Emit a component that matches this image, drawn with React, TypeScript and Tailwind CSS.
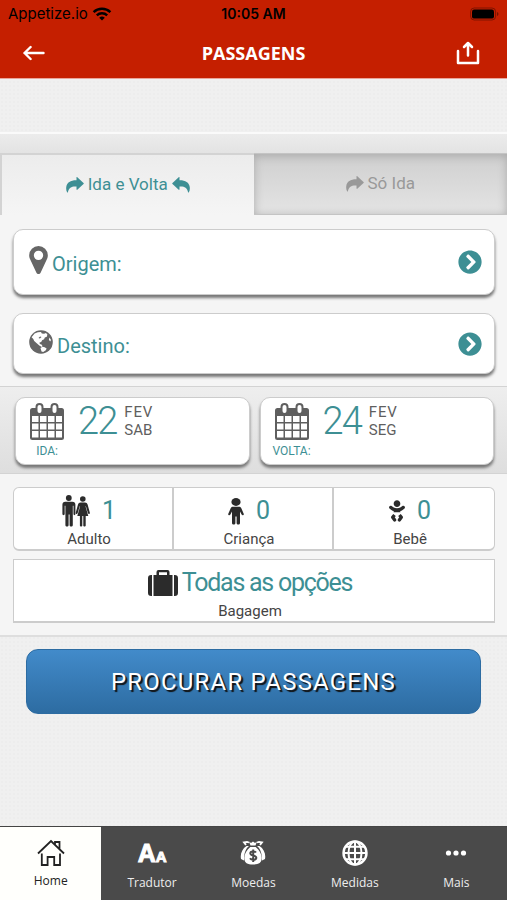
import type { ReactNode } from 'react';
import { useState } from 'react';
import { FaBaby, FaChevronCircleRight } from 'react-icons/fa';

function WifiIcon() {
	return (
		<svg viewBox="0 0 20 14" className="h-[14px] w-5" fill="none" stroke="currentColor" strokeWidth="2.4" aria-hidden="true">
			<path d="M1.6 5.2a12 12 0 0 1 16.8 0" />
			<path d="M4.8 8.4a7.4 7.4 0 0 1 10.4 0" />
			<path d="M10 13.6 7.2 10.8a4 4 0 0 1 5.6 0z" fill="currentColor" stroke="none" />
		</svg>
	);
}

function BatteryIcon() {
	return (
		<svg viewBox="0 0 29 14" className="h-[14px] w-[29px]" aria-hidden="true">
			<rect x=".6" y="1" width="25" height="12" rx="3.6" fill="none" stroke="#000" strokeOpacity=".35" />
			<rect x="2" y="2.6" width="22" height="9" rx="2.2" />
			<path d="M27 5v4c2-.8 2-3.200 0-4z" fillOpacity=".4" />
		</svg>
	);
}

function BackIcon() {
	return (
		<svg viewBox="0 0 22 16" className="h-4 w-[22px]" fill="none" stroke="currentColor" strokeWidth="2.4" strokeLinecap="round" strokeLinejoin="round" aria-hidden="true">
			<path d="M20.500 8H1.500M7.600 2 1.500 8l6.100 6" />
		</svg>
	);
}

function ExportIcon() {
	return (
		<svg viewBox="0 0 24 24" className="size-6" fill="none" stroke="currentColor" strokeWidth="2.500" strokeLinecap="round" strokeLinejoin="round" aria-hidden="true">
			<path d="M2 10v12h20V10M12 14.600V2.200M8 6l4-4 4 4" />
		</svg>
	);
}

function ShareIcon({ flipped }: { flipped?: boolean }) {
	return (
		<svg viewBox="0 0 18 16" className={flipped ? 'h-4 w-[18px] -scale-x-100' : 'h-4 w-[18px]'} fill="currentColor" aria-hidden="true">
			<path d="M10.500.4c0-.4.5-.5.8-.2l6.200 5.700c.4.4.4.8 0 1.200l-6.200 5.600c-.3.300-.8.200-.8-.2V9.600C5.800 9.200 3 10.600 1.900 15.200c-.1.500-.6.500-.8.100C.2 13.500 0 12 .3 9.800 1 5.400 4.600 3.100 10.500 3.200z" />
		</svg>
	);
}

function MarkerIcon() {
	return (
		<svg viewBox="0 0 1024 1536" className="h-7 w-[19px] text-[#666]" fill="currentColor" aria-hidden="true">
			<path d="M768 512q0-106-75-181t-181-75-181 75-75 181 75 181 181 75 181-75 75-181zm256 0q0 109-33 179l-364 774q-16 33-47.500 52t-67.500 19-67.500-19-46.500-52l-365-774q-33-70-33-179 0-212 150-362t362-150 362 150 150 362z" />
		</svg>
	);
}

function EarthIcon() {
	return (
		<svg viewBox="0 0 24 24" className="size-6" aria-hidden="true">
			<circle cx="12" cy="12" r="11.800" fill="#666" />
			<path d="M2.600 7.200 5.600 3.600l3.200-1.300 3.200-.2.800 1.500 2.300.2 1.900-.7 1.400 1.300-.6 2.300-2 .9-.7 1.700-2 1-.9 1.800-1.700.3.300 1.700 1.700.3 1 1.600-.6.900-2.300-1.200-2.600-2.300L5.200 11l-.9-2z" fill="#fff" />
			<path d="m9.500 8 1.600-1.500 1.400.4-1.600 1.500z" fill="#666" />
			<path d="M11.500 18 13.500 16.800l2.200.4 1.900 1.400-.8 1.600-2.600 1.700-1.700-.4z" fill="#fff" />
			<path d="M20.500 7.500 22 10l-.8 1.500-1.300-1.700z" fill="#fff" />
		</svg>
	);
}

function CalendarIcon() {
	return (
		<svg viewBox="0 0 34 38" className="h-[38px] w-[34px]" aria-hidden="true">
			<rect y="5" width="34" height="32" rx="2.500" fill="#5f5f5f" />
			<g fill="#fff">
				<path d="M2 13h6.500v6H2zM10 13h6.500v6H10zM18 13h6.500v6H18zM26 13h6v6h-6z" />
				<path d="M2 20.500h6.500v6H2zM10 20.500h6.500v6H10zM18 20.500h6.500v6H18zM26 20.500h6v6h-6z" />
				<path d="M2 28h6.500v6.500H2zM10 28h6.500v6.500H10zM18 28h6.500v6.500H18zM26 28h6v6.500h-6z" />
			</g>
			<rect x="6.500" y="1" width="6" height="10" rx="3" fill="#fff" stroke="#5f5f5f" strokeWidth="2" />
			<rect x="21.500" y="1" width="6" height="10" rx="3" fill="#fff" stroke="#5f5f5f" strokeWidth="2" />
		</svg>
	);
}

function AdultsIcon() {
	return (
		<svg viewBox="0 0 28 32" className="h-8 w-7" fill="currentColor" aria-hidden="true">
			<circle cx="6.800" cy="3" r="2.900" />
			<path d="M3.200 6.700h7.200c1.900 0 3 1.200 3 3V19c0 1.500-1.900 1.500-1.900 0v-8.300h-.7V30c0 2-3.200 2-3.200 0V19.500h-1V30c0 2-3.200 2-3.200 0V10.700h-.7V19C2.700 20.500.4 20.500.4 19V9.700c0-1.800 1.100-3 2.800-3z" />
			<circle cx="20.800" cy="4" r="2.800" />
			<path d="M18.600 7.500H23c1.400 0 2.200.8 2.600 2l2.200 8c.4 1.500-1.400 2-1.900.5l-2-6.700h-.4L26.300 21h-2.600v9.400c0 1.500-2.400 1.500-2.400 0V21h-1v9.400c0 1.500-2.400 1.500-2.400 0V21h-2.600l2.800-9.700h-.4L15.700 18c-.5 1.500-2.300 1-1.900-.5l2.200-8c.4-1.200 1.200-2 2.600-2z" />
		</svg>
	);
}

function ChildIcon() {
	return (
		<svg viewBox="0 0 16 27" className="h-[27px] w-4" fill="currentColor" aria-hidden="true">
			<ellipse cx="8" cy="4" rx="4.600" ry="3.900" />
			<path d="M5 8.800h6c1 0 1.700.4 2.200 1.300l2.500 5.600c.6 1.400-1.400 2.300-2.100.9L12 13.600V25c0 2-3.400 2-3.400 0v-6.500H7.400V25c0 2-3.400 2-3.400 0V13.600l-1.600 3c-.7 1.400-2.700.5-2.100-.9l2.500-5.600C3.300 9.200 4 8.800 5 8.800z" />
		</svg>
	);
}

function SuitcaseIcon() {
	return (
		<svg viewBox="0 0 30 26" className="h-[26px] w-[30px]" fill="currentColor" aria-hidden="true">
			<path d="M4 5v21h-.8A3.200 3.200 0 0 1 0 22.800V8.200A3.200 3.200 0 0 1 3.200 5zM24.500 5v21h-19V5h3V2A2 2 0 0 1 10.500 0h9a2 2 0 0 1 2 2v3zM11 2.200V5h8V2.200zM26 5h.8A3.200 3.200 0 0 1 30 8.200v14.600a3.200 3.200 0 0 1-3.200 3.200H26z" />
		</svg>
	);
}

function HomeIcon() {
	return (
		<svg viewBox="0 0 28 28" className="size-7" fill="none" stroke="currentColor" strokeWidth="1.800" aria-hidden="true">
			<path d="M1 14.500 14 2l13 12.500M4.800 14.500V26h5.800v-8h6.600v8H23V14.500M18 5.200V3h4.500v6.500" />
		</svg>
	);
}

function LettersIcon() {
	return (
		<span className="flex h-7 items-baseline font-['Liberation_Sans',sans-serif] font-bold text-white [-webkit-text-stroke:1px_white]" aria-hidden="true">
			<span className="text-[25px] leading-7">A</span>
			<span className="text-[15px] leading-7">A</span>
		</span>
	);
}

function MoneyIcon() {
	return (
		<svg viewBox="0 0 28 28" className="size-7" aria-hidden="true">
			<path d="M7 6 5 3.500l3-.5 2 .5M21 6l2-2.500-3-.5-2 .500" fill="none" stroke="#fff" strokeWidth="1.800" />
			<path d="M7.500 7C3 10 1 15 2 20l3 1.500C5 15 6 10.500 10 7zM20.500 7c4.500 3 6.500 8 5.500 13l-3 1.500C23 15 22 10.500 18 7z" fill="#fff" />
			<path d="M10 2.500 12 4l2-1.500L16 4l2-1.500-1.500 4h-5zM11.300 8h5.400c3.800 3 6 7 6 11 0 5-3.200 6.500-8.700 6.500S5.300 24 5.300 19c0-4 2.200-8 6-11z" fill="#fff" />
			<path d="M17 13.500c-1-1.500-5.700-1.700-5.700.8 0 3 6 1.500 6 4.500 0 2.500-5 2.500-6.300.5M14.200 10.500v12.500" fill="none" stroke="#4a4a4a" strokeWidth="2" />
		</svg>
	);
}

function GlobeIcon() {
	return (
		<svg viewBox="0 0 28 28" className="size-7" fill="none" stroke="#fff" strokeWidth="2" aria-hidden="true">
			<circle cx="14" cy="14" r="11.500" strokeWidth="2.400" />
			<ellipse cx="14" cy="14" rx="6.500" ry="11.500" />
			<path d="M14 2.500v23M2.500 14h23M4.500 7.800h19M4.500 20.200h19" />
		</svg>
	);
}

function DotsIcon() {
	return (
		<svg viewBox="0 0 28 28" className="size-7" fill="#fff" aria-hidden="true">
			<circle cx="6.500" cy="14" r="2.600" />
			<circle cx="14" cy="14" r="2.600" />
			<circle cx="21.500" cy="14" r="2.600" />
		</svg>
	);
}

function PlaceButton({ label, icon, className }: { label: string; icon: ReactNode; className: string }) {
	return (
		<button
			type="button"
			className={`${className} flex w-full items-center rounded-[10px] border border-[#ccc] bg-white pr-3 pl-[15px] text-left text-xl text-[#3d8f94] shadow-[0_3px_3px_#777]`}
		>
			<span className="pr-1 pb-1">{icon}</span>
			<span className="grow pt-1">{label}</span>
			<FaChevronCircleRight className="size-6" />
		</button>
	);
}

function DateButton({ label, day, month, weekday }: { label: string; day: string; month: string; weekday: string }) {
	return (
		<button
			type="button"
			className="flex h-[68px] grow items-start rounded-[10px] border border-[#ccc] bg-white pt-[5px] pl-3 text-left shadow-[0_3px_3px_#777]"
		>
			<span className="flex w-[38px] flex-col items-center">
				<CalendarIcon />
				<span className="pt-[2px] text-xs leading-4 text-[#3d8f94]">{label}</span>
			</span>
			<span className="pl-3 text-[38px] leading-9 font-light tracking-tighter text-[#3d8f94]">{day}</span>
			<span className="flex flex-col pl-2 text-[15px] leading-[18px] text-[#5f5f5f]">
				<span className="tracking-wider">{month}</span>
				<span>{weekday}</span>
			</span>
		</button>
	);
}

function Passenger({ label, count, icon }: { label: string; count: number; icon: ReactNode }) {
	return (
		<button type="button" className="flex flex-col items-center pt-[5px] pr-2">
			<span className="flex h-9 items-center gap-3 text-[#2b2b2b]">
				{icon}
				<span className="text-[25px] leading-9 text-[#3d8f94]">{count}</span>
			</span>
			<span className="text-[15px] leading-5 text-[#444]">{label}</span>
		</button>
	);
}

const links = [
	{ label: 'Home', icon: <HomeIcon />, active: true },
	{ label: 'Tradutor', icon: <LettersIcon /> },
	{ label: 'Moedas', icon: <MoneyIcon /> },
	{ label: 'Medidas', icon: <GlobeIcon /> },
	{ label: 'Mais', icon: <DotsIcon /> },
];

export default function App() {
	const [roundTrip, setRoundTrip] = useState(true);

	const activeTab = 'border-t-2 border-l-2 border-[#d3d3d3] bg-linear-to-b from-[#ececec] to-[#f5f5f5] text-[#3d8f94]';
	const idleTab = 'border-y border-[#c4c4c4] bg-linear-to-b from-[#cfcfcf] to-[#e4e4e4] text-[#999] shadow-[inset_0_2px_10px_#aaa]';

	return (
		<div className="flex min-h-screen flex-col bg-[#f0f0f0] bg-[radial-gradient(#ededed_1px,transparent_1px)] bg-size-[4px_4px] font-[Roboto,sans-serif]">
			<header className="border-b border-[#e9a59a] bg-[#c51f00] text-white">
				<div className="grid h-7 grid-cols-3 items-center px-2 font-[Inter,sans-serif] text-sm text-black">
					<span className="flex items-center gap-1 text-[15px]">
						Appetize.io <WifiIcon />
					</span>
					<span className="text-center font-semibold">10:05 AM</span>
					<span className="flex justify-end">
						<BatteryIcon />
					</span>
				</div>
				<div className="grid h-[50px] grid-cols-3 items-center px-[23px]">
					<button type="button" className="justify-self-start" aria-label="Voltar">
						<BackIcon />
					</button>
					<h1 className="text-center font-['Open_Sans',sans-serif] text-lg font-bold">PASSAGENS</h1>
					<button type="button" className="justify-self-end pr-1" aria-label="Compartilhar">
						<ExportIcon />
					</button>
				</div>
			</header>

			<main>
				<div className="h-[55px] border-b-2 border-[#fafafa]" />
				<div className="h-[19px] bg-linear-to-b from-[#ececec] to-[#e3e3e3]" />

				<div className="grid h-[62px] grid-cols-2 bg-[#f5f5f5] text-[17px]" role="tablist">
					<button
						type="button"
						role="tab"
						aria-selected={roundTrip}
						onClick={() => setRoundTrip(true)}
						className={`flex items-center justify-center gap-1 ${roundTrip ? activeTab : idleTab}`}
					>
						<ShareIcon /> Ida e Volta <ShareIcon flipped />
					</button>
					<button
						type="button"
						role="tab"
						aria-selected={!roundTrip}
						onClick={() => setRoundTrip(false)}
						className={`flex items-center justify-center gap-1 ${roundTrip ? idleTab : activeTab}`}
					>
						<ShareIcon /> Só Ida
					</button>
				</div>

				<section className="flex flex-col gap-[18px] border-b border-[#d3d3d3] bg-[#f5f5f5] pt-[14px] pr-3 pb-3 pl-[13px]">
					<PlaceButton label="Origem:" icon={<MarkerIcon />} className="h-[66px]" />
					<PlaceButton label="Destino:" icon={<EarthIcon />} className="h-[61px]" />
				</section>

				<section className="flex gap-[10px] border-b border-[#d3d3d3] bg-linear-to-b from-[#eeeeee] to-[#dedede] pt-[10px] pr-[13px] pb-2 pl-[15px]">
					<DateButton label="IDA:" day="22" month="FEV" weekday="SAB" />
					<DateButton label="VOLTA:" day="24" month="FEV" weekday="SEG" />
				</section>

				<section className="flex flex-col gap-2 border-b-2 border-[#dedede] bg-[#f5f5f5] pt-[13px] pr-3 pb-3 pl-[13px]">
					<div className="grid h-16 grid-cols-3 divide-x-2 divide-[#ccc] rounded-md border border-b-2 border-[#ccc] bg-white">
						<Passenger label="Adulto" count={1} icon={<AdultsIcon />} />
						<Passenger label="Criança" count={0} icon={<ChildIcon />} />
						<Passenger label="Bebê" count={0} icon={<FaBaby className="h-6 w-4" />} />
					</div>
					<button type="button" className="flex h-16 flex-col items-center border border-b-2 border-[#ccc] bg-white pt-[5px] pr-2">
						<span className="flex h-9 items-center gap-1 text-[#2b2b2b]">
							<SuitcaseIcon />
							<span className="text-[25px] leading-9 tracking-tighter text-[#3d8f94]">Todas as opções</span>
						</span>
						<span className="text-[15px] leading-5 text-[#444]">Bagagem</span>
					</button>
				</section>

				<div className="px-[26px] py-3">
					<button
						type="button"
						className="h-[65px] w-full rounded-xl border border-[#2d6ca2] bg-linear-to-b from-[#428bca] to-[#2d6ca2] text-2xl tracking-wider text-white [text-shadow:2px_2px_1px_#111]"
					>
						PROCURAR PASSAGENS
					</button>
				</div>
			</main>

			<nav className="mt-auto grid h-[74px] grid-cols-5 border-t border-[#444] bg-[#4a4a4a] font-['Open_Sans',sans-serif] text-xs leading-4">
				{links.map(({ label, icon, active }) => (
					<a
						key={label}
						href="#"
						className={active ? 'flex flex-col items-center gap-[6px] bg-[#fffffc] pt-3 text-[#222]' : 'flex flex-col items-center gap-2 pt-3 text-[#eee]'}
					>
						{icon}
						{label}
					</a>
				))}
			</nav>
		</div>
	);
}
